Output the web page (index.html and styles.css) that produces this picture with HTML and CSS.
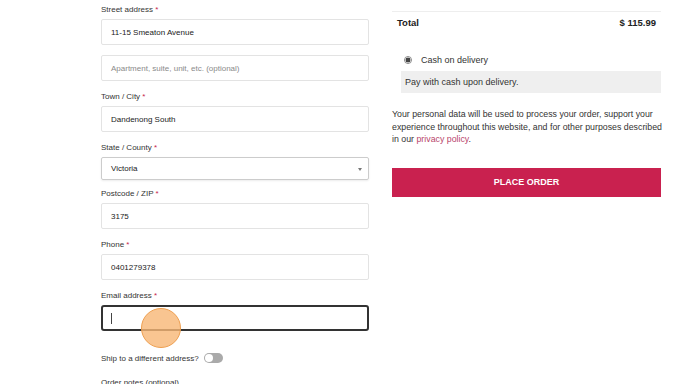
FILE: index.html
```html
<!DOCTYPE html>
<html lang="en">
<head>
  <meta charset="UTF-8" />
  <meta name="viewport" content="width=device-width, initial-scale=1.0" />
  <title>Checkout</title>
  <link rel="stylesheet" href="styles.css">
</head>
<body>
  <div class="checkout">
    <div class="billing">
      <div class="field">
        <label>Street address <span class="req">*</span></label>
        <div class="input">11-15 Smeaton Avenue</div>
      </div>
      <div class="field">
        <div class="input placeholder">Apartment, suite, unit, etc. (optional)</div>
      </div>
      <div class="field">
        <label>Town / City <span class="req">*</span></label>
        <div class="input">Dandenong South</div>
      </div>
      <div class="field field-select">
        <label>State / County <span class="req">*</span></label>
        <div class="input select">Victoria<span class="caret"></span></div>
      </div>
      <div class="field">
        <label>Postcode / ZIP <span class="req">*</span></label>
        <div class="input">3175</div>
      </div>
      <div class="field">
        <label>Phone <span class="req">*</span></label>
        <div class="input">0401279378</div>
      </div>
      <div class="field">
        <label>Email address <span class="req">*</span></label>
        <div class="input focused"><span class="cursor"></span><span class="tap"></span></div>
      </div>
      <div class="ship">
        <span>Ship to a different address?</span>
        <span class="toggle"></span>
      </div>
      <label class="notes">Order notes (optional)</label>
    </div>

    <div class="review">
      <div class="total">
        <span>Total</span>
        <span>$ 115.99</span>
      </div>
      <div class="payment">
        <div class="method">
          <span class="radio"></span>
          <span>Cash on delivery</span>
        </div>
        <div class="method-box">Pay with cash upon delivery.</div>
      </div>
      <p class="privacy">Your personal data will be used to process your order, support your experience throughout this website, and for other purposes described in our <a href="#">privacy policy</a>.</p>
      <button class="place-order">PLACE ORDER</button>
    </div>
  </div>
</body>
</html>
```

FILE: styles.css
```css
body {
  margin: 0;
  background: #fff;
  color: #333;
  font-family: 'Liberation Sans', Arial, sans-serif;
  font-size: 8px;
  overflow: hidden;
}
.checkout {
  display: flex;
  gap: 23px;
  padding: 3px 0 0 101px;
}
.billing {
  width: 268px;
  padding-top: 1px;
}
.field {
  margin-bottom: 10px;
}
.field-select {
  margin-bottom: 8px;
}
.field label,
.notes {
  display: block;
  line-height: 12px;
  margin-bottom: 3px;
  color: #333;
}
.req {
  color: #c7254e;
}
.input {
  position: relative;
  box-sizing: border-box;
  height: 26px;
  border: 1px solid #e3e3e3;
  border-radius: 2px;
  padding: 0 9px;
  display: flex;
  align-items: center;
  color: #222;
}
.placeholder {
  color: #8a8a8a;
}
.select {
  height: 23px;
  border-color: #ccc;
  box-shadow: 0 1px 2px rgba(0, 0, 0, 0.08);
}
.caret {
  position: absolute;
  right: 6px;
  top: 10px;
  border-left: 2px solid transparent;
  border-right: 2px solid transparent;
  border-top: 3px solid #777;
}
.focused {
  border: 2px solid #333;
  border-radius: 3px;
  padding: 0 8px;
}
.cursor {
  width: 1px;
  height: 11px;
  background: #444;
}
.tap {
  position: absolute;
  left: 38px;
  top: 1px;
  width: 38px;
  height: 38px;
  border-radius: 50%;
  background: rgba(248, 182, 118, 0.8);
  border: 1px solid #ee9f50;
}
.ship {
  display: flex;
  align-items: center;
  gap: 5px;
  margin-top: 22px;
}
.toggle {
  position: relative;
  width: 19px;
  height: 10px;
  border-radius: 5px;
  background: #aaa;
}
.toggle::after {
  content: '';
  position: absolute;
  left: 1px;
  top: 1px;
  width: 8px;
  height: 8px;
  border-radius: 50%;
  background: #fff;
}
.notes {
  margin-top: 14px;
}
.review {
  width: 269px;
  font-size: 9px;
}
.total {
  display: flex;
  justify-content: space-between;
  margin-top: 8px;
  border-top: 1px solid #eee;
  padding: 5px 5px 0;
  line-height: 12px;
  font-weight: bold;
  font-size: 9.5px;
  color: #222;
}
.payment {
  margin: 25px 0 0 9px;
}
.method {
  display: flex;
  align-items: center;
  gap: 9px;
  padding-left: 3px;
  line-height: 12px;
  color: #333;
}
.radio {
  box-sizing: border-box;
  width: 8px;
  height: 8px;
  border-radius: 50%;
  border: 1px solid #888;
  background: radial-gradient(circle, #444 0 2.2px, #fff 2.7px);
}
.method-box {
  margin-top: 5px;
  background: #efefef;
  height: 22px;
  display: flex;
  align-items: center;
  padding-left: 4px;
  color: #333;
}
.privacy {
  margin: 15px -5px 0 0;
  font-size: 8.8px;
  line-height: 12.5px;
  color: #333;
}
.privacy a {
  color: #b9466c;
  text-decoration: none;
}
.place-order {
  display: block;
  width: 100%;
  height: 29px;
  margin-top: 22px;
  border: none;
  background: #c9214f;
  color: #fff;
  font-family: inherit;
  font-size: 9px;
  font-weight: bold;
}
```
